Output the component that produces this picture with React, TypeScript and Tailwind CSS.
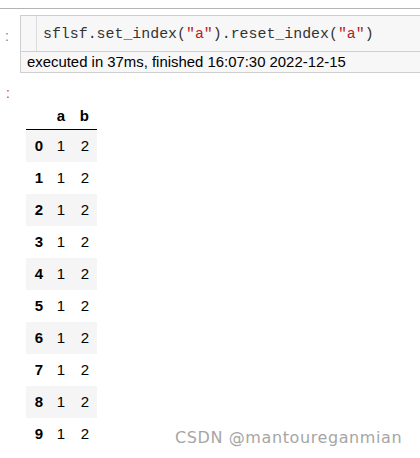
const rows = [0, 1, 2, 3, 4, 5, 6, 7, 8, 9]

function Code() {
  const str = 'text-[#ba2121]'
  return (
    <span className="text-[#333]">
      sflsf.set_index(<span className={str}>″a″</span>).reset_index(
      <span className={str}>″a″</span>)
    </span>
  )
}

export default function App() {
  return (
    <div
      className="relative h-[458px] w-[420px] overflow-hidden bg-white"
      style={{ fontFamily: '"Liberation Sans", Arial, sans-serif' }}
    >
      {/* top rule */}
      <div className="h-[8px]" />
      <div className="h-px bg-[#b4b4b4]" />
      <div className="h-[6px]" />

      {/* input cell */}
      <div className="flex">
        <div className="w-[20px] shrink-0 pt-[14px] pl-[5px] text-[14px] leading-none text-[#7a7f9a]">:</div>
        <div className="w-[420px] shrink-0 border border-[#cfcfcf] bg-[#f7f7f7]">
          <div className="flex h-[35px]">
            <div className="w-[16px] shrink-0 border-r border-[#dddddd]" />
            <div
              className="flex items-center pl-[6px] pt-[1px] text-[14.9px] whitespace-pre"
              style={{ fontFamily: '"Liberation Mono", "DejaVu Sans Mono", monospace' }}
            >
              <Code />
            </div>
          </div>
          <div className="flex h-[21px] items-center border-t border-[#cfcfcf] pl-[6px] text-[14.9px] text-black">
            executed in 37ms, finished 16:07:30 2022-12-15
          </div>
        </div>
      </div>

      {/* output cell */}
      <div className="flex pt-[13px]">
        <div className="w-[20px] shrink-0 pl-[6px] text-[14px] leading-none text-[#d84315]">:</div>
      </div>
      <div className="ml-[26px] w-[71px] pt-[1px] text-[15px] text-black">
        <div className="flex h-[29px] items-end border-b border-black pb-[2px] font-bold">
          <div className="w-[25px]" />
          <div className="w-[22px] pr-[8px] text-right">a</div>
          <div className="w-[24px] pr-[8px] text-right">b</div>
        </div>
        {rows.map((r) => (
          <div
            key={r}
            className={`flex h-[32px] items-center ${r % 2 === 0 ? 'bg-[#f5f5f5]' : 'bg-white'}`}
          >
            <div className="w-[25px] pr-[8px] text-right font-bold">{r}</div>
            <div className="w-[22px] pr-[8px] text-right">1</div>
            <div className="w-[24px] pr-[8px] text-right">2</div>
          </div>
        ))}
      </div>

      {/* watermark */}
      <div
        className="absolute left-[175px] top-[430px] text-[16px] leading-none tracking-[0.6px] text-[#a6a6a6]"
        style={{ fontFamily: '"DejaVu Sans", Verdana, sans-serif' }}
      >
        CSDN @mantoureganmian
      </div>
    </div>
  )
}
